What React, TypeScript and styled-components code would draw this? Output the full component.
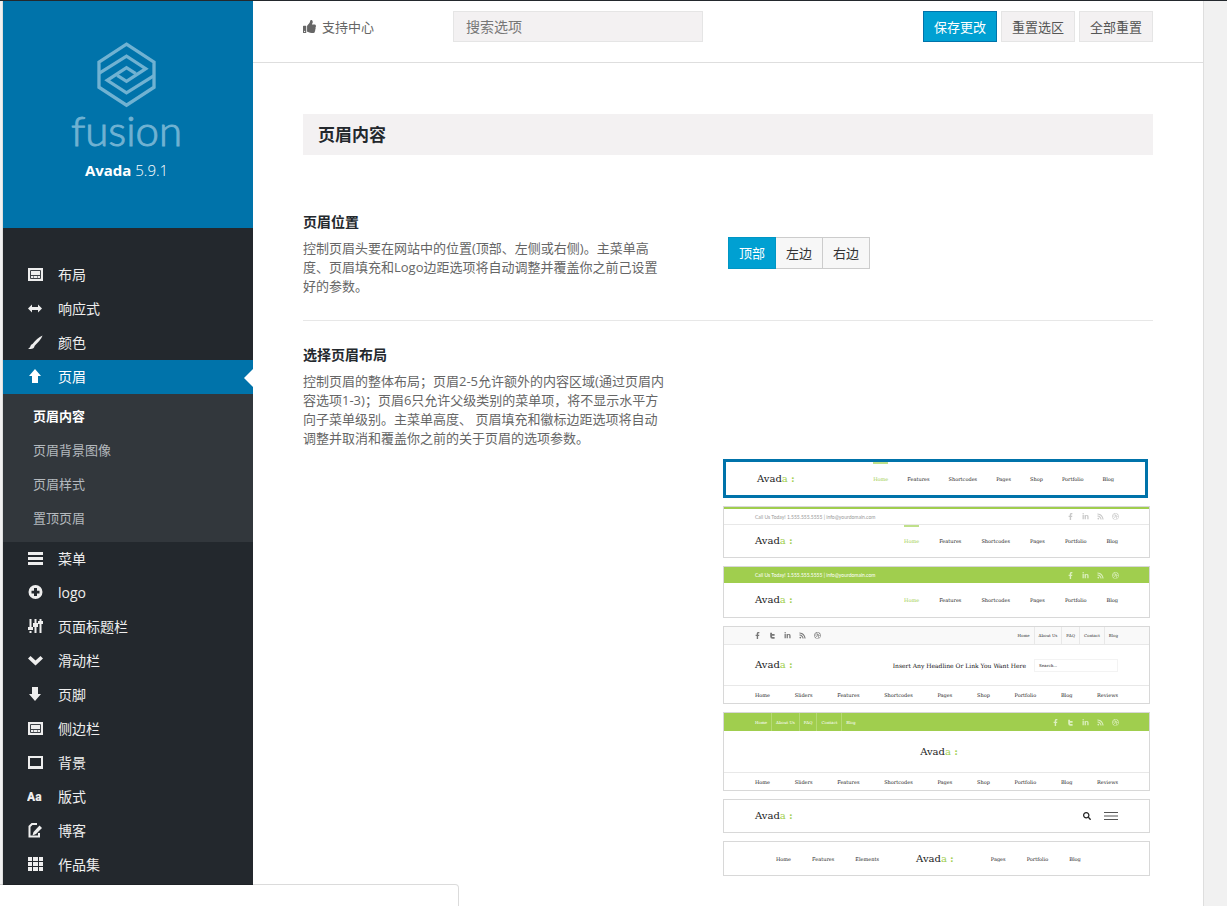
import React, { useState } from "react";
import styled, { createGlobalStyle, css } from "styled-components";
import { FaDribbble, FaFacebookF, FaLinkedinIn, FaRss, FaSearch, FaThumbsUp } from "react-icons/fa";

const blue = "#0073aa";
const green = "#a0ce4e";
const sans = `"Open Sans", "Noto Sans CJK SC", sans-serif`;
const slab = `"DejaVu Serif", serif`;

const Global = createGlobalStyle`
  *, *::before, *::after { box-sizing: border-box; }
  body { margin: 0; background: #f1f1f1; font-family: ${sans}; font-size: 13px; color: #555; }
  h1, h2, h3, p, ul { margin: 0; padding: 0; }
  ul { list-style: none; }
  button, input { font-family: inherit; }
`;

const Page = styled.div`
  min-height: 100vh;
  display: flex;
  border-top: 1px solid #23282d;
  padding: 0 23px 0 2px;
`;
const Panel = styled.div`
  flex: 1;
  display: flex;
  border: solid #dedede;
  border-width: 0 1px;
  background: #fff;
`;

/* Sidebar */
const Sidebar = styled.aside`
  width: 250px;
  flex: none;
  background: #23282d;
`;
const Brand = styled.header`
  display: flex;
  flex-direction: column;
  align-items: center;
  height: 227px;
  padding: 39px 3px 0 0;
  background: ${blue};
  color: #fff;
`;
const Wordmark = styled.div`
  font: 300 42px/42px Lato, sans-serif;
  color: #70b2d2;
  -webkit-text-stroke: 1px #70b2d2;
`;
const Version = styled.p`
  margin-top: 7px;
  font-size: 15px;
  line-height: 24px;
  font-weight: 300;
  b { font-weight: 700; }
`;
const Menu = styled.nav`
  padding-top: 30px;
`;
const MenuLink = styled.a<{ $active?: boolean }>`
  position: relative;
  display: flex;
  align-items: center;
  gap: 15px;
  height: 34px;
  padding: 0 0 2px 24px;
  font-size: 14px;
  color: #eee;
  text-decoration: none;
  svg { width: 16px; height: 16px; flex: none; }
  ${(p) =>
    p.$active &&
    css`
      background: ${blue};
      color: #fff;
      &::after {
        content: "";
        position: absolute;
        right: 0;
        top: 9px;
        border: 9px solid transparent;
        border-left-width: 0;
        border-right-color: #fff;
      }
    `}
`;
const SubMenu = styled.ul`
  padding: 5px 0 7px;
  background: #32373c;
`;
const SubLink = styled.a<{ $active?: boolean }>`
  display: block;
  padding-left: 30px;
  line-height: 34px;
  font-weight: ${(p) => (p.$active ? 700 : 400)};
  color: ${(p) => (p.$active ? "#fff" : "#b4b9be")};
  text-decoration: none;
`;

/* Content */
const Content = styled.main`
  flex: 1;
  min-width: 0;
`;
const Toolbar = styled.div`
  display: flex;
  align-items: flex-start;
  height: 62px;
  padding: 10px 50px 0;
  border-bottom: 1px solid #dedede;
`;
const Support = styled.a`
  display: flex;
  align-items: center;
  gap: 6px;
  width: 150px;
  height: 31px;
  color: #666;
  text-decoration: none;
`;
const Search = styled.input`
  width: 250px;
  height: 31px;
  padding: 0 12px;
  border: 1px solid #e5e5e5;
  border-radius: 0;
  background: #f3f1f2;
  font-size: 14px;
  &::placeholder { color: #777; opacity: 1; }
`;
const Actions = styled.div`
  display: flex;
  gap: 4px;
  margin-left: auto;
`;
const Action = styled.button<{ $primary?: boolean }>`
  height: 31px;
  padding: 0 10px 1px;
  border: 1px solid ${(p) => (p.$primary ? blue : "#e5e5e5")};
  background: ${(p) => (p.$primary ? "#00a0d2" : "#f3f1f2")};
  color: ${(p) => (p.$primary ? "#fff" : "#555")};
  font-size: 13px;
`;
const Body = styled.div`
  padding: 51px 50px 30px;
`;
const Heading = styled.h2`
  margin-bottom: 33px;
  padding-left: 15px;
  background: #f3f1f2;
  font-size: 17px;
  line-height: 41px;
  color: #23282d;
`;
const Field = styled.section`
  display: grid;
  grid-template-columns: 1fr 1fr;
  row-gap: 11px;
  padding-top: 24px;
  & + & { margin-top: 24px; border-top: 1px solid #e7e7e7; }
`;
const FieldTitle = styled.h3`
  margin-bottom: 7px;
  font-size: 14px;
  line-height: 20px;
  color: #23282d;
`;
const FieldText = styled.p`
  max-width: 364px;
  line-height: 19px;
  color: #666;
`;
const hiddenInput = css`
  position: absolute;
  opacity: 0;
  margin: 0;
`;
const Segments = styled.div`
  display: flex;
  align-self: start;
  padding-top: 25px;
`;
const Segment = styled.label<{ $on: boolean }>`
  height: 32px;
  padding: 0 10px;
  border: 1px solid ${(p) => (p.$on ? "#0096c4" : "#ccc")};
  background: ${(p) => (p.$on ? "#00a0d2" : "#f7f7f7")};
  color: ${(p) => (p.$on ? "#fff" : "#333")};
  line-height: 30px;
  & + & { border-left-width: 0; }
  input { ${hiddenInput} }
`;

/* Header layout previews */
const Choices = styled.div`
  grid-row: 2;
  grid-column: 2;
  display: flex;
  flex-direction: column;
  gap: 8px;
  margin: 0 3px 0 -5px;
`;
const Choice = styled.label<{ $on: boolean }>`
  border: 1px solid #d8d8d8;
  background: #fff;
  font-family: ${slab};
  overflow: hidden;
  input { ${hiddenInput} }
  ${(p) =>
    p.$on &&
    css`
      margin-right: 2px;
      border: 3px solid ${blue};
    `}
`;
const Strip = styled.div<{ $h: number; $tone?: "green" | "grey"; $rule?: boolean; $cap?: boolean }>`
  display: flex;
  align-items: center;
  justify-content: space-between;
  height: ${(p) => p.$h}px;
  padding: 0 31px;
  color: ${(p) => (p.$tone === "green" ? "#fff" : "#333")};
  background: ${(p) => (p.$tone === "green" ? green : p.$tone === "grey" ? "#f9f9f9" : "#fff")};
  ${(p) => p.$rule && "border-bottom: 1px solid #e8e8e8;"}
  ${(p) => p.$cap && `border-top: 2px solid ${green}; color: #999;`}
`;
const Mark = styled.span`
  font-size: 10px;
  line-height: 12px;
  color: #222;
  i { font-style: normal; color: ${green}; }
  b { color: ${green}; }
`;
const Items = styled.span<{ $gap: number }>`
  display: flex;
  align-self: stretch;
  gap: ${(p) => p.$gap}px;
`;
const Item = styled.span<{ $home?: boolean; $bar?: boolean }>`
  display: flex;
  align-items: center;
  font-size: 5px;
  color: ${(p) => (p.$home ? green : "#222")};
  ${(p) => p.$bar && `box-shadow: inset 0 2px #bfe08a;`}
`;
const TinyItems = styled.span<{ $line: string }>`
  display: flex;
  align-self: stretch;
  font-size: 4px;
  margin: 0 -4px;
  span { display: flex; align-items: center; padding: 0 4px; }
  span + span { border-left: 1px solid ${(p) => p.$line}; }
`;
const Contact = styled.span`
  font: 5px/8px Lato, sans-serif;
`;
const Socials = styled.span<{ $tint: string }>`
  display: flex;
  gap: 8px;
  margin: 0 -1px;
  color: ${(p) => p.$tint};
  svg { width: 7px; height: 7px; }
`;
const Promo = styled.span`
  display: flex;
  align-items: center;
  gap: 8px;
  font-size: 6px;
  color: #111;
`;
const MiniSearch = styled.span`
  width: 84px;
  padding-left: 4px;
  border: 1px solid #f3f3f3;
  font-size: 4px;
  line-height: 11px;
`;
const Tools = styled.span`
  display: flex;
  align-items: center;
  gap: 13px;
  color: #222;
`;
const Split = styled(Strip)`
  justify-content: flex-start;
  gap: 37px;
  padding-left: 52px;
`;
const Centered = styled(Strip)`
  justify-content: center;
  padding-right: 26px;
`;

const StatusBubble = styled.div`
  position: fixed;
  left: 0;
  bottom: 0;
  width: 459px;
  height: 22px;
  border: solid rgba(0, 0, 0, 0.14);
  border-width: 1px 1px 0 0;
  border-top-right-radius: 4px;
  background: #fff;
  background-clip: padding-box;
`;

const icons: Record<string, React.ReactNode> = {
  layout: (
    <>
      <path d="M1 2h15v13H1z" />
      <path d="M3.500 4.500h10v8h-10zM3.500 9.500h10" fill="none" stroke="#3c4146" />
      <path d="M6.500 10v2M10.500 10v2" fill="none" stroke="#8a8d90" />
    </>
  ),
  resize: <path d="M1 8.500 5 4.500V7h6V4.500l4 4-4 4V10H5v2.500z" />,
  brush: <path d="M15.500 1.500C12 3 8 6.500 5.500 10c-1 .3-1.600 1-2 2-.3 1-1 2-2.500 3 2.500.3 4.500-.1 5.600-1 .7-.7.9-1.300.9-2C10.500 9 14.500 5 15.500 1.500z" />,
  up: <path d="M8 1 2 8H5V15h6V8h3z" />,
  lines: <path d="M1 2h15v3H1zM1 7h15v3H1zM1 12h15v3H1z" />,
  plus: <path fillRule="evenodd" d="M8.500 1a7 7 0 1 1 0 14 7 7 0 0 1 0-14zM7 4v2.700H4.500v2.800H7V12h3V9.500h2.500V6.700H10V4z" />,
  sliders: <path d="M2.500 1h2v8H6v3H1V9h1.500zM2.500 13h2v2h-2zM7.500 1h2v4H11v4h-1.500v6h-2V9H6V5h1.500zM12.500 1h2v2H16v3h-1.500v9h-2V6H11V3h1.500z" />,
  chevron: <path d="M1 6.500 3.500 4l5 4.500L13.500 4 16 6.500 8.500 13.500z" />,
  down: <path d="M8 15 2 8H5V1h6v7h3z" />,
  screen: <path fillRule="evenodd" d="M1 2h15v13H1zM3 4v8h11V4z" />,
  type: (
    <text x="0" y="13" fontFamily="Roboto, sans-serif" fontSize="12" fontWeight="900">
      Aa
    </text>
  ),
  edit: (
    <>
      <path d="M10 2H5L2.500 4.500V14.500H12V11" fill="none" stroke="currentColor" strokeWidth="2" />
      <path d="M12.500 3.500 15 6 9 12l-3.500 1.500L6.500 10z" />
    </>
  ),
  grid: <path d="M1 1h4v4H1zM6 1h5v4H6zM12 1h4v4h-4zM1 6h4v4H1zM6 6h5v4H6zM12 6h4v4h-4zM1 11h4v4H1zM6 11h5v4H6zM12 11h4v4h-4z" />,
};

const menu = [
  ["layout", "布局"],
  ["resize", "响应式"],
  ["brush", "颜色"],
  ["up", "页眉"],
  ["lines", "菜单"],
  ["plus", "logo"],
  ["sliders", "页面标题栏"],
  ["chevron", "滑动栏"],
  ["down", "页脚"],
  ["layout", "侧边栏"],
  ["screen", "背景"],
  ["type", "版式"],
  ["edit", "博客"],
  ["grid", "作品集"],
];
const subMenu = ["页眉内容", "页眉背景图像", "页眉样式", "置顶页眉"];

const Avada = () => (
  <Mark>
    Avad<i>a</i> <b>:</b>
  </Mark>
);

const Nav = ({ items, gap, bar, home = true }: { items: string; gap: number; bar?: boolean; home?: boolean }) => (
  <Items $gap={gap}>
    {items.split(" ").map((t) => (
      <Item key={t} $home={home && t === "Home"} $bar={bar && t === "Home"}>
        {t}
      </Item>
    ))}
  </Items>
);

const FullNav = () => (
  <Strip $h={17}>
    {"Home Sliders Features Shortcodes Pages Shop Portfolio Blog Reviews".split(" ").map((t) => (
      <Item key={t}>{t}</Item>
    ))}
  </Strip>
);

const TopLinks = ({ line }: { line: string }) => (
  <TinyItems $line={line}>
    {["Home", "About Us", "FAQ", "Contact", "Blog"].map((t) => (
      <span key={t}>{t}</span>
    ))}
  </TinyItems>
);

const Social = ({ tint, bird }: { tint: string; bird?: boolean }) => (
  <Socials $tint={tint}>
    <FaFacebookF />
    {bird && (
      <svg viewBox="0 0 10 10" aria-hidden="true">
        <path d="M3 1v5.500Q3 8.500 5 8.500h3M3 4h5" fill="none" stroke="currentColor" strokeWidth="2.600" />
      </svg>
    )}
    <FaLinkedinIn />
    <FaRss />
    <FaDribbble />
  </Socials>
);

const phone = "Call Us Today! 1.555.555.5555  |  info@yourdomain.com";
const mainNav = "Home Features Shortcodes Pages Portfolio Blog";

const previews: React.ReactNode[] = [
  <Strip $h={33}>
    <Avada />
    <Nav items="Home Features Shortcodes Pages Shop Portfolio Blog" gap={19} bar />
  </Strip>,
  <>
    <Strip $h={18} $cap $rule>
      <Contact>{phone}</Contact>
      <Social tint="#c8c8c8" />
    </Strip>
    <Strip $h={32}>
      <Avada />
      <Nav items={mainNav} gap={20} bar />
    </Strip>
  </>,
  <>
    <Strip $h={16} $tone="green">
      <Contact>{phone}</Contact>
      <Social tint="#dcefc0" />
    </Strip>
    <Strip $h={34}>
      <Avada />
      <Nav items={mainNav} gap={20} />
    </Strip>
  </>,
  <>
    <Strip $h={18} $tone="grey" $rule>
      <Social tint="#777" bird />
      <TopLinks line="#e8e8e8" />
    </Strip>
    <Strip $h={41} $rule>
      <Avada />
      <Promo>
        Insert Any Headline Or Link You Want Here
        <MiniSearch>Search...</MiniSearch>
      </Promo>
    </Strip>
    <FullNav />
  </>,
  <>
    <Strip $h={18} $tone="green">
      <TopLinks line="#b5da74" />
      <Social tint="#dcefc0" bird />
    </Strip>
    <Centered $h={42} $rule>
      <Avada />
    </Centered>
    <FullNav />
  </>,
  <Strip $h={32}>
    <Avada />
    <Tools>
      <FaSearch size={8} />
      <svg width="14" height="8" viewBox="0 0 14 8" aria-hidden="true">
        <path d="M0 .5h14M0 4h14M0 7.500h14" stroke="#555" />
      </svg>
    </Tools>
  </Strip>,
  <Split $h={33}>
    <Nav items="Home Features Elements" gap={21} home={false} />
    <Avada />
    <Nav items="Pages Portfolio Blog" gap={21} />
  </Split>,
];

export default function App() {
  const [position, setPosition] = useState("顶部");
  const [layout, setLayout] = useState(0);
  return (
    <>
      <Global />
      <Page>
        <Panel>
          <Sidebar>
            <Brand>
              <svg width="61" height="69" viewBox="288 120 184 207" aria-hidden="true">
                <g fill="none" stroke="#70b2d2" strokeWidth="10">
                  <path d="M380 132 463 186V262L380 316 297 262V186z" />
                  <path d="M297 220 380 168 438 206 380 244 352 226" />
                  <path d="M463 227 380 279 322 241 380 203 408 221" />
                </g>
              </svg>
              <Wordmark>fusion</Wordmark>
              <Version>
                <b>Avada</b> 5.9.1
              </Version>
            </Brand>
            <Menu>
              {menu.map(([icon, label]) => {
                const active = label === "页眉";
                return (
                  <React.Fragment key={label}>
                    <MenuLink href="#" $active={active}>
                      <svg viewBox="0 0 16 16" fill="currentColor" aria-hidden="true">
                        {icons[icon]}
                      </svg>
                      {label}
                    </MenuLink>
                    {active && (
                      <SubMenu>
                        {subMenu.map((s, i) => (
                          <li key={s}>
                            <SubLink href="#" $active={i === 0}>
                              {s}
                            </SubLink>
                          </li>
                        ))}
                      </SubMenu>
                    )}
                  </React.Fragment>
                );
              })}
            </Menu>
          </Sidebar>
          <Content>
            <Toolbar>
              <Support href="#">
                <FaThumbsUp size={13} />
                支持中心
              </Support>
              <Search type="text" placeholder="搜索选项" aria-label="搜索选项" />
              <Actions>
                <Action type="button" $primary>
                  保存更改
                </Action>
                <Action type="button">重置选区</Action>
                <Action type="button">全部重置</Action>
              </Actions>
            </Toolbar>
            <Body>
              <Heading>页眉内容</Heading>
              <Field>
                <div>
                  <FieldTitle>页眉位置</FieldTitle>
                  <FieldText>
                    控制页眉头要在网站中的位置(顶部、左侧或右侧)。主菜单高度、页眉填充和Logo边距选项将自动调整并覆盖你之前己设置好的参数。
                  </FieldText>
                </div>
                <Segments role="radiogroup" aria-label="页眉位置">
                  {["顶部", "左边", "右边"].map((p) => (
                    <Segment key={p} $on={p === position}>
                      <input type="radio" name="position" checked={p === position} onChange={() => setPosition(p)} />
                      {p}
                    </Segment>
                  ))}
                </Segments>
              </Field>
              <Field>
                <div>
                  <FieldTitle>选择页眉布局</FieldTitle>
                  <FieldText>
                    控制页眉的整体布局；页眉2-5允许额外的内容区域(通过页眉内容选项1-3)；页眉6只允许父级类别的菜单项，将不显示水平方向子菜单级别。主菜单高度、
                    页眉填充和徽标边距选项将自动调整并取消和覆盖你之前的关于页眉的选项参数。
                  </FieldText>
                </div>
                <Choices role="radiogroup" aria-label="选择页眉布局">
                  {previews.map((preview, i) => (
                    <Choice key={i} $on={i === layout}>
                      <input type="radio" name="layout" checked={i === layout} onChange={() => setLayout(i)} />
                      {preview}
                    </Choice>
                  ))}
                </Choices>
              </Field>
            </Body>
          </Content>
        </Panel>
        <StatusBubble />
      </Page>
    </>
  );
}
